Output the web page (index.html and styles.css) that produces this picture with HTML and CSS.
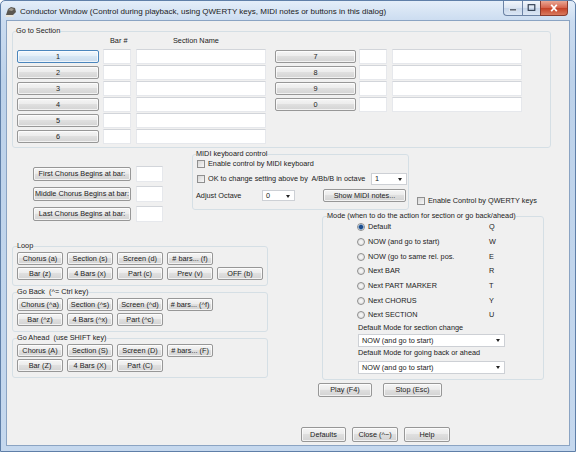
FILE: index.html
```html
<!DOCTYPE html>
<html lang="en">
<head>
    <meta charset="UTF-8">
    <title>Conductor Window</title>
    <link rel="stylesheet" href="styles.css">
</head>
<body>
<div class="window">
    <div class="titlebar">
        <svg class="app-icon" viewBox="0 0 12 11">
            <path d="M1 9 L3 3 L6 1 L10 2 L11 6 L8 9 Z" fill="#5b5750"/>
            <path d="M3 4 L6 2 L9 3 L7 5 Z" fill="#a09a8e"/>
            <path d="M1 9 L8 9 L9 11 L0 11 Z" fill="#e8e4da"/>
        </svg>
        <span class="title">Conductor Window (Control during playback, using QWERTY keys, MIDI notes or buttons in this dialog)</span>
        <div class="caption-btns">
            <span class="cap min"><svg viewBox="0 0 19 14"><rect x="6" y="8" width="7" height="2" fill="#2d3a4d" stroke="#fff" stroke-width=".6"/></svg></span>
            <span class="cap max"><svg viewBox="0 0 18 14"><rect x="5.5" y="3.5" width="7" height="6" fill="none" stroke="#2d3a4d" stroke-width="1.2"/></svg></span>
            <span class="cap close"><svg viewBox="0 0 28 14"><path d="M11 3.5 L17 10.5 M17 3.5 L11 10.5" stroke="#fff" stroke-width="2"/></svg></span>
        </div>
    </div>

    <div class="client">
        <fieldset class="group goto">
            <legend>Go to Section</legend>
            <div class="goto-head"><span class="h-bar">Bar #</span><span>Section Name</span></div>
            <div class="goto-cols">
                <div class="goto-col">
                    <div class="sec-row"><button class="btn sec-btn focus">1</button><span class="edit bar"></span><span class="edit name"></span></div>
                    <div class="sec-row"><button class="btn sec-btn">2</button><span class="edit bar"></span><span class="edit name"></span></div>
                    <div class="sec-row"><button class="btn sec-btn">3</button><span class="edit bar"></span><span class="edit name"></span></div>
                    <div class="sec-row"><button class="btn sec-btn">4</button><span class="edit bar"></span><span class="edit name"></span></div>
                    <div class="sec-row"><button class="btn sec-btn">5</button><span class="edit bar"></span><span class="edit name"></span></div>
                    <div class="sec-row"><button class="btn sec-btn">6</button><span class="edit bar"></span><span class="edit name"></span></div>
                </div>
                <div class="goto-col col2">
                    <div class="sec-row"><button class="btn sec-btn">7</button><span class="edit bar"></span><span class="edit name"></span></div>
                    <div class="sec-row"><button class="btn sec-btn">8</button><span class="edit bar"></span><span class="edit name"></span></div>
                    <div class="sec-row"><button class="btn sec-btn">9</button><span class="edit bar"></span><span class="edit name"></span></div>
                    <div class="sec-row"><button class="btn sec-btn">0</button><span class="edit bar"></span><span class="edit name"></span></div>
                </div>
            </div>
        </fieldset>

        <div class="mid">
            <div class="chorus">
                <div class="chorus-row"><button class="btn chorus-btn">First Chorus Begins at bar:</button><span class="edit short"></span></div>
                <div class="chorus-row"><button class="btn chorus-btn">Middle Chorus Begins at bar:</button><span class="edit short"></span></div>
                <div class="chorus-row"><button class="btn chorus-btn">Last Chorus Begins at bar:</button><span class="edit short"></span></div>
            </div>
            <fieldset class="group midi">
                <legend>MIDI keyboard control</legend>
                <div class="midi-row"><span class="check"></span>Enable control by MIDI keyboard</div>
                <div class="midi-row r2"><span class="check"></span><span>OK to change setting above by&nbsp; A/Bb/B in octave</span><span class="combo oct">1</span></div>
                <div class="midi-row r3"><span class="lbl">Adjust Octave</span><span class="combo adj">0</span><button class="btn show">Show MIDI notes...</button></div>
            </fieldset>
            <div class="qwerty"><span class="check"></span>Enable Control by QWERTY keys</div>
        </div>

        <div class="lower">
            <div class="actions">
                <fieldset class="group act">
                    <legend>Loop</legend>
                    <div class="act-row"><button class="btn">Chorus (a)</button><button class="btn">Section (s)</button><button class="btn">Screen (d)</button><button class="btn"># bars... (f)</button></div>
                    <div class="act-row"><button class="btn">Bar (z)</button><button class="btn">4 Bars (x)</button><button class="btn">Part (c)</button><button class="btn">Prev (v)</button><button class="btn">OFF (b)</button></div>
                </fieldset>
                <fieldset class="group act">
                    <legend>Go Back&nbsp; (^= Ctrl key)</legend>
                    <div class="act-row"><button class="btn">Chorus (^a)</button><button class="btn">Section (^s)</button><button class="btn">Screen (^d)</button><button class="btn"># bars... (^f)</button></div>
                    <div class="act-row"><button class="btn">Bar (^z)</button><button class="btn">4 Bars (^x)</button><button class="btn">Part (^c)</button></div>
                </fieldset>
                <fieldset class="group act">
                    <legend>Go Ahead&nbsp; (use SHIFT key)</legend>
                    <div class="act-row"><button class="btn">Chorus (A)</button><button class="btn">Section (S)</button><button class="btn">Screen (D)</button><button class="btn"># bars... (F)</button></div>
                    <div class="act-row"><button class="btn">Bar (Z)</button><button class="btn">4 Bars (X)</button><button class="btn">Part (C)</button></div>
                </fieldset>
            </div>

            <div class="right">
                <fieldset class="group mode">
                    <legend>Mode (when to do the action for section or go back/ahead)</legend>
                    <div class="mode-body">
                        <div class="radios">
                            <div class="radio-row"><span class="radio on"></span><span class="radio-label">Default</span>Q</div>
                            <div class="radio-row"><span class="radio"></span><span class="radio-label">NOW (and go to start)</span>W</div>
                            <div class="radio-row"><span class="radio"></span><span class="radio-label">NOW (go to same rel. pos.</span>E</div>
                            <div class="radio-row"><span class="radio"></span><span class="radio-label">Next BAR</span>R</div>
                            <div class="radio-row"><span class="radio"></span><span class="radio-label">Next PART MARKER</span>T</div>
                            <div class="radio-row"><span class="radio"></span><span class="radio-label">Next CHORUS</span>Y</div>
                            <div class="radio-row"><span class="radio"></span><span class="radio-label">Next SECTION</span>U</div>
                        </div>
                        <div class="mode-label">Default Mode for section change</div>
                        <div class="combo wide first">NOW (and go to start)</div>
                        <div class="mode-label">Default Mode for going back or ahead</div>
                        <div class="combo wide second">NOW (and go to start)</div>
                    </div>
                </fieldset>
                <div class="transport">
                    <button class="btn play">Play (F4)</button>
                    <button class="btn stop">Stop (Esc)</button>
                </div>
                <div class="footer-btns">
                    <button class="btn defaults">Defaults</button>
                    <button class="btn closebtn">Close (^~)</button>
                    <button class="btn help">Help</button>
                </div>
            </div>
        </div>
    </div>
</div>
</body>
</html>
```

FILE: styles.css
```css
* {
    box-sizing: border-box;
}

body {
    margin: 0;
    background: #ffffff;
    font-family: "Liberation Sans", Arial, sans-serif;
}

/* --- window frame --- */
.window {
    width: 576px;
    height: 452px;
    border: 1px solid #5f7fa8;
    border-radius: 5px 5px 0 0;
    background: linear-gradient(#e4eef9, #cbdcf0 20px, #bdd2ea 80px, #c5d8ee);
    overflow: hidden;
}

.titlebar { height: 20px; display: flex; align-items: center; padding-left: 4px; }
.app-icon { width: 12px; height: 11px; margin-right: 3px; }
.title { font-size: 8px; color: #1a1a1a; white-space: nowrap; }

.caption-btns { margin-left: auto; margin-right: 7px; align-self: flex-start; display: flex; }
.cap { display: block; height: 15px; border: 1px solid #6c83a5; border-top: none; }
.cap svg { display: block; width: 100%; height: 100%; }
.min { width: 19px; border-right: none; border-radius: 0 0 0 4px; background: linear-gradient(#f2f6fb, #dbe5f2 50%, #c7d6ea 50%, #dce7f4); }
.max { width: 18px; border-right: none; background: linear-gradient(#f2f6fb, #dbe5f2 50%, #c7d6ea 50%, #dce7f4); }
.close { width: 28px; border-color: #8a3b2e; border-radius: 0 0 4px 0; background: linear-gradient(#eaa895, #d5614a 50%, #c33f24 50%, #d97a5f); }

/* --- client area --- */
.client {
    margin: 0 6px;
    height: 424px;
    padding-top: 5px;
    background: #f0f0f0;
    box-shadow: 0 0 0 1px #8ba4c3;
    font-size: 7.3px;
    line-height: 10px;
    color: #222;
}

.group {
    margin: 0;
    padding: 0;
    min-width: 0;
    border: 1px solid #d5dfe5;
    border-radius: 3px;
}
.group legend { padding: 0; height: 10px; line-height: 10px; white-space: nowrap; }

/* buttons, edits, checks */
.btn {
    font: inherit;
    color: #222;
    margin: 0;
    padding: 0;
    border: 1px solid #979797;
    border-radius: 2px;
    background: linear-gradient(#f5f5f5, #ececec 45%, #dfdfdf 50%, #d3d3d3);
    box-shadow: inset 0 0 0 1px rgba(255, 255, 255, 0.7);
    line-height: 1;
    white-space: nowrap;
    overflow: hidden;
}
.btn.focus { border-color: #4b86bd; background: linear-gradient(#f1f7fc, #e4eff9 45%, #d6e6f4 50%, #cadcee); }

.edit { display: block; background: #fff; border: 1px solid #e6e8ec; border-top-color: #d2d5da; }

.check {
    display: block;
    width: 8px;
    height: 8px;
    border: 1px solid #8f8f8f;
    background: linear-gradient(135deg, #d6d6d6, #f7f7f7);
    margin: 0 3px 0 1px;
    flex-shrink: 0;
}

.combo {
    position: relative;
    display: block;
    background: #fff;
    border: 1px solid #cdd0d5;
    padding-left: 3px;
    line-height: 10px;
}
.combo::after {
    content: "";
    position: absolute;
    right: 4px;
    top: 50%;
    margin-top: -1px;
    border-left: 2.5px solid transparent;
    border-right: 2.5px solid transparent;
    border-top: 3px solid #222;
}

/* --- go to section --- */
.goto { width: 539px; margin-left: 5px; padding: 0 0 3px 4px; }
.goto legend { margin-left: -1px; }
.goto-head { display: flex; height: 10px; margin-bottom: 3px; }
.h-bar { margin-left: 93px; width: 63px; }
.goto-cols { display: flex; gap: 9px; }
.goto-col { display: flex; flex-direction: column; gap: 1px; }
.sec-row { display: flex; align-items: center; height: 15px; }
.sec-btn { width: 82px; height: 13px; margin-right: 4px; }
.col2 .sec-btn { width: 81px; margin-right: 3px; }
.edit.bar { width: 28px; height: 15px; margin-right: 5px; }
.edit.name { width: 130px; height: 15px; }

/* --- chorus + midi --- */
.mid { display: flex; align-items: flex-start; height: 63px; }
.chorus { margin: 18px 0 0 26px; display: flex; flex-direction: column; gap: 4px; }
.chorus-row { display: flex; align-items: center; height: 16px; }
.chorus-btn { width: 98px; height: 14px; margin-right: 5px; }
.edit.short { width: 27px; height: 16px; }

.midi { width: 217px; margin: 1px 0 0 29px; padding: 0 0 7px 3px; }
.midi-row { display: flex; align-items: center; height: 10px; }
.midi-row.r2 { margin-top: 4px; height: 12px; }
.midi-row.r3 { margin-top: 4px; height: 13px; }
.combo.oct { width: 36px; height: 12px; margin: 0 1px 0 auto; }
.lbl { width: 66px; }
.combo.adj { width: 33px; height: 11px; }
.show { width: 83px; height: 13px; margin-left: 28px; }

.qwerty { display: flex; align-items: center; height: 10px; margin: 48px 0 0 7px; white-space: nowrap; }

/* --- lower part --- */
.lower { display: flex; align-items: flex-start; }
.actions { width: 256px; margin: 30px 0 0 5px; display: flex; flex-direction: column; gap: 1px; }
.act { padding: 1px 0 5px 4px; }
.act-row { display: flex; gap: 4px; }
.act-row + .act-row { margin-top: 2px; }
.act .btn { width: 46px; height: 13px; }

.right { width: 222px; margin-left: 54px; }
.mode { padding: 0 0 5px 4px; }
.mode-body { margin-left: 31px; }
.radios { margin-top: -1px; }
.radio-row { display: flex; align-items: center; height: 14.7px; margin-left: -1px; }
.radio {
    display: block;
    width: 8px;
    height: 8px;
    border-radius: 50%;
    border: 1px solid #8f8f8f;
    background: radial-gradient(circle, #fafafa, #d9d9d9);
    margin-right: 3px;
}
.radio.on { background: radial-gradient(circle, #1d4d8c 0 1.6px, #6a9bd0 2.4px, #eef2f7 3px); }
.radio-label { width: 121px; }
.mode-label { height: 10px; }
.combo.wide { width: 147px; height: 13px; line-height: 11px; }
.combo.first { margin: 1px 0 1px; }
.combo.second { margin-top: 3px; }

.transport { display: flex; gap: 11px; margin: 3px 0 0 -4px; }
.play { width: 54px; height: 14px; }
.stop { width: 59px; height: 14px; }

.footer-btns { display: flex; gap: 6px; margin: 30px 0 0 -21px; }
.footer-btns .btn { height: 15px; }
.defaults { width: 45px; }
.closebtn { width: 46px; }
.help { width: 46px; }
```
